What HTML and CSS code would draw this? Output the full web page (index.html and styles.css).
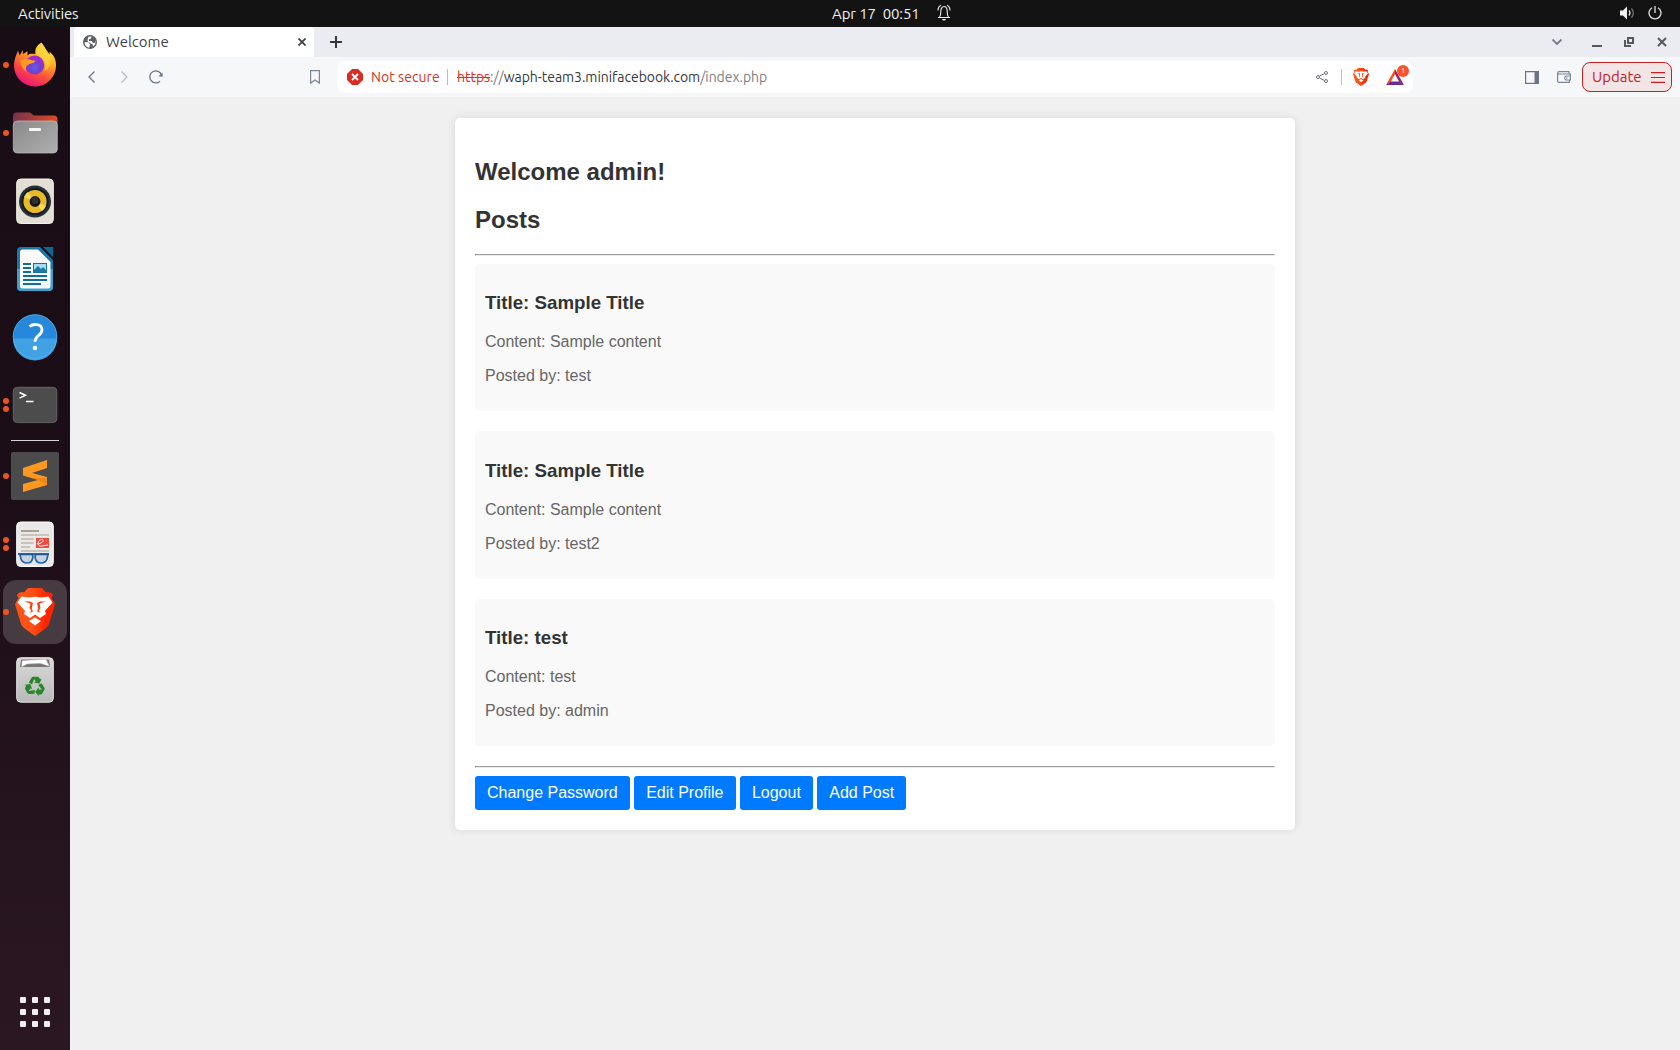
FILE: index.html
```html
<!DOCTYPE html>
<html lang="en">
<head>
<meta charset="utf-8">
<title>Welcome</title>
<link rel="stylesheet" href="styles.css">
</head>
<body>
<header class="topbar">
  <span class="activities">Activities</span>
  <span class="clock">Apr 17&nbsp; 00:51</span>
  <svg class="bell" width="14" height="18" viewBox="0 0 14 18" fill="none" stroke="#eee" stroke-width="1.1"><path d="M1 13.500h12M2.600 13c1-1.400 1.200-3 1.200-5.500C3.800 4.500 5.200 2.500 7 2.500s3.200 2 3.200 5c0 2.500.2 4.100 1.200 5.500M1 6.500C1 4.200 2.200 2 4 1.200M13 6.500C13 4.200 11.800 2 10 1.200"/><path d="M5 15h4l-1 1.500H6z" fill="#eee" stroke="none"/></svg>
  <div class="status">
    <svg width="15" height="14" viewBox="0 0 15 14" fill="none"><path d="M0 4.500h3L7 .5v13l-4-4H0z" fill="#f2f2f2"/><path d="M9 4.500q2 2.500 0 5" stroke="#ddd" stroke-width="1.300"/><path d="M11.500 2.300q3.500 4.700 0 9.400" stroke="#777" stroke-width="1.200"/></svg>
    <svg width="14" height="14" viewBox="0 0 14 14" fill="none" stroke="#e4e4e4" stroke-width="1.300"><path d="M7 0v7M4 1.700a6 6 0 1 0 6 0"/></svg>
  </div>
</header>
<div class="desktop">
  <nav class="dock">
    <div class="app"><i class="dots"><b></b></i>
      <svg width="48" height="48" viewBox="0 0 48 48"><defs><linearGradient id="fx" x1=".8" y1="0" x2=".3" y2="1"><stop offset="0" stop-color="#fff44f"/><stop offset=".35" stop-color="#ffae25"/><stop offset=".68" stop-color="#ff4b3d"/><stop offset="1" stop-color="#e8127c"/></linearGradient><radialGradient id="fp" cx=".5" cy=".65"><stop offset="0" stop-color="#625cf0"/><stop offset=".6" stop-color="#7040cf"/><stop offset="1" stop-color="#a02bd0"/></radialGradient></defs>
      <path fill="url(#fx)" d="M30.500 1.500C33 5 35 8 36.500 12l2 1.500v-2.800C43.500 14.500 45 19 45 24a21 21 0 0 1-42 1C3 18 5.500 14 7 9.500l1.500 5L12 9l-.2 4.200 4.600-3 .1 4.300c3-3 5-1.200 8-1.700C23.500 7 26.500 4 30.500 1.500z"/><circle cx="23.700" cy="24" r="9.500" fill="url(#fp)"/><path fill="#ff9920" d="M9 19.500c3-1.800 7-2 10-1 1.800 1 4 1 5.500 1.200-1 2.600-4 2.400-6 3.200-3.500 1.500-5 4.500-3 7.600-4-2-5.500-6.500-6.500-11z"/><path fill="#ffd43b" opacity=".8" d="M25 13c1-5 3-8 5.500-11 2.500 6 8 8 9 15 1 7-2 11-6 13 2-6 1-12-8.500-17z"/></svg></div>
    <div class="app"><i class="dots"><b></b></i>
      <svg width="48" height="48" viewBox="0 0 48 48"><defs><linearGradient id="fo"><stop offset="0" stop-color="#74334c"/><stop offset="1" stop-color="#df4d22"/></linearGradient><linearGradient id="fg" x2="1" y2="1"><stop offset="0" stop-color="#898989"/><stop offset="1" stop-color="#afafaf"/></linearGradient></defs><path fill="url(#fo)" d="M2 7.500q0-4 4-4h12q2 0 3 1.500T24 6.500h18.500q4 0 4 4v10H2z"/><rect x="2.300" y="12" width="44" height="32" rx="4" fill="url(#fg)" stroke="#c1c1c1" stroke-width=".7"/><rect x="18" y="19" width="12" height="3" rx="1" fill="#f7f7f7"/></svg></div>
    <div class="app"><i class="dots"></i>
      <svg width="48" height="48" viewBox="0 0 48 48"><rect x="5.700" y="2" width="36.600" height="44.500" rx="4" fill="#e3dfd5" stroke="#f4f1ea"/><circle cx="24" cy="24.500" r="16" fill="#273039"/><circle cx="24" cy="24.500" r="13.300" fill="#10151b"/><circle cx="24" cy="24.500" r="11.600" fill="#e7b92b"/><path d="M24 24.500 13 20a12 12 0 0 1 4-5zM24 24.500 35 29a12 12 0 0 1-4 5z" fill="#f6d85c"/><circle cx="24" cy="24.500" r="5.400" fill="#161616"/><circle cx="24" cy="23.500" r="3.500" fill="#303030"/></svg></div>
    <div class="app"><i class="dots"></i>
      <svg width="48" height="48" viewBox="0 0 48 48"><path fill="#1778aa" d="M10 2h19l13 13v27q0 4-4 4H10q-4 0-4-4V6q0-4 4-4z"/><path fill="#3fa0cc" d="M6 24h36v18q0 4-4 4H10q-4 0-4-4z"/><path fill="#fafafa" d="M11.500 4.500H27L39.500 17v24q0 2.500-2.500 2.500H11.500Q9 43.500 9 41V7q0-2.500 2.500-2.500z"/><path fill="#12658e" d="M32 2h10.300v10.500z"/><path stroke="#0d6e9f" stroke-width="2" d="M12 19h8M12 23h8M12 27h8M12 31h24M12 35h24M12 39h18"/><rect x="22.500" y="18.500" width="13" height="9" fill="#a9ddf4" stroke="#16729f"/><path d="M23 27v-2l4-4 3 3 2-2 4 4v1z" fill="#187bac"/></svg></div>
    <div class="app"><i class="dots"></i>
      <svg width="48" height="48" viewBox="0 0 48 48"><circle cx="24" cy="23.500" r="22" fill="#2588db"/><path fill="#41a1e5" d="M2 25.500h44a22 22 0 0 1-44 0z"/><circle cx="24" cy="23.500" r="21.800" fill="none" stroke="#5ab1ea" stroke-width=".8"/><path fill="none" stroke="#fff" stroke-width="2.800" d="M18.500 13.500c3.500-3 12.500-3 12.500 3.200 0 6-7 5.500-7 12"/><circle cx="24" cy="35" r="2.300" fill="#fff"/></svg></div>
    <div class="app"><i class="dots"><b></b><b></b></i>
      <svg width="48" height="48" viewBox="0 0 48 48"><rect x="2.300" y="6.300" width="43.500" height="35.300" rx="4" fill="#4c4c4c" stroke="#707070" stroke-width=".8"/><path fill="none" stroke="#fff" stroke-width="1.500" d="m8.500 11.500 6 2.800-6 2.800M15 20.500h7.500"/></svg></div>
    <div class="divider"></div>
    <div class="app"><i class="dots"><b></b></i>
      <svg width="48" height="48" viewBox="0 0 48 48"><rect width="48" height="48" rx="2" fill="#4a4b4a"/><path fill="#ff9820" d="M12 16 36 8v8l-15 5 15 4v8l-24 7v-8l15-4-15-4.500z"/><path fill="#e17d0c" d="m20 26 16 0v7l-9-5z" opacity=".55"/></svg></div>
    <div class="app"><i class="dots"><b></b><b></b></i>
      <svg width="48" height="48" viewBox="0 0 48 48"><rect x="5.700" y="2" width="36.600" height="44.500" rx="4" fill="#e9e9e7" stroke="#fff"/><path stroke="#a8a294" stroke-width="2" d="M10 11h18"/><path stroke="#c9c5ba" stroke-width="2" d="M10 15h28M10 19h13M10 23h13M10 27h9M10 31h28"/><rect x="25" y="18" width="13" height="10" fill="#ed4c43"/><path stroke="#fff" fill="none" d="M26 24c4 0 9-4 5-4.500-5 0-5 8 0 6.500l6-1"/><path fill="#c9d3da" stroke="#1d63ae" stroke-width="1.700" d="M9 34.500h12q1.500 1 .5 4.500-1 4-5.500 4t-6-4zM25 34.500h12l-1 4.500q-1.500 4-6 4t-5.500-4q-1-3.500.5-4.500z"/><path stroke="#1b579b" stroke-width="1.800" d="M7 34h31"/></svg></div>
    <div class="app active"><i class="dots"><b></b></i>
      <svg width="48" height="48" viewBox="0 0 48 48"><defs><linearGradient id="br"><stop offset=".4" stop-color="#ff5218"/><stop offset=".8" stop-color="#ff2300"/></linearGradient></defs>
      <g id="lion"><path fill="url(#br)" d="m17 0-4 4.500q-4-1.500-7 2.500l1.500 3L4 16l6 20q.8 2.300 3 4l11 8 11-8q2.200-1.700 3-4l6-20-3.500-6L42 7q-3-4-7-2.500L31 0z"/><path fill="#fff" d="m10.500 8.500 7.500 1 6-.8 6 .8 7.500-1 4 6-7.500 8.500 1 3-6 4-5-3.500-5 3.500-6-4 1-3-7.500-8.500zM18 33l6-3.500 6 3.500-6 4.500z"/><path fill="#fb3d10" d="M13 13.500l6 0 3 1.500-1.300 5.500 1.300 3-4 1.500 2.300-2-1.800-3 1-4.500zM35 13.500l-6 0-3 1.500 1.300 5.500-1.300 3 4 1.500-2.300-2 1.800-3-1-4.500z"/></g></svg></div>
    <div class="app"><i class="dots"></i>
      <svg width="48" height="48" viewBox="0 0 48 48"><defs><linearGradient id="tr" x2="0" y2="1"><stop offset="0" stop-color="#d9d9d9"/><stop offset="1" stop-color="#b9b9b9"/></linearGradient></defs><rect x="5.700" y="1.700" width="36.600" height="44.500" rx="4" fill="url(#tr)" stroke="#e4e4e4"/><path fill="#777" d="M10 3.500h28l1 7.500H9z"/><path fill="#fff" stroke="#999" stroke-width=".5" d="m11 4.500 24-1.500 3.500 7.500-9-3-13 .5-6 3z"/><g fill="#26862a"><path id="arrow" d="m17.800 26.500 2.700-4.800q.6-1 1.700-1h4.300q1 0 1.600 1l1 1.600 1.600-.9-2.200 5.200-5.500-.8 1.800-1.200-1.600-2.600-2.200 5.500z"/><use href="#arrow" transform="rotate(120 24 30.500)"/><use href="#arrow" transform="rotate(240 24 30.500)"/></g></svg></div>
    <div class="show-apps"><i></i><i></i><i></i><i></i><i></i><i></i><i></i><i></i><i></i></div>
  </nav>
  <section class="browser">
    <div class="tabs">
      <div class="tab">
        <svg width="14" height="14" viewBox="0 0 14 14"><circle cx="7" cy="7" r="7" fill="#5d6065"/><path fill="#fff" d="M1.500 7.200h3.200L7 9v1.500L6 12.700A5.700 5.700 0 0 1 1.500 7.200zM5.500 1.800 8.500 1.500 8 3.500 5.800 4.500 6 6h2.500l1.500 2h1.500l1-2.500-.3 4-2.200 2L9.500 9H8L7 7.500H5L4.500 5z"/></svg>
        <span class="tab-title">Welcome</span>
        <svg width="8" height="8" viewBox="0 0 8 8" stroke="#3b3d42" stroke-width="1.700"><path d="m.5.500 7 7m0-7-7 7"/></svg>
      </div>
      <svg class="plus" width="12" height="12" viewBox="0 0 12 12" stroke="#35363b" stroke-width="2"><path d="M6 0v12M0 6h12"/></svg>
      <div class="controls">
        <svg width="10" height="6" viewBox="0 0 10 6" fill="none" stroke="#707889" stroke-width="1.800"><path d="m.5.500 4.500 4.500L9.500.5"/></svg>
        <svg width="10" height="10" viewBox="0 0 10 10" stroke="#55585d" stroke-width="2"><path d="M0 9h10"/></svg>
        <svg width="10" height="10" viewBox="0 0 10 10" fill="none" stroke="#55585d" stroke-width="2"><path d="M4 1h5v5H4zM1 3v6h6"/></svg>
        <svg width="10" height="10" viewBox="0 0 10 10" stroke="#55585d" stroke-width="2"><path d="m1 1 8 8m0-8-8 8"/></svg>
      </div>
    </div>
    <div class="toolbar">
      <svg class="back" width="7" height="12" viewBox="0 0 7 12" fill="none" stroke="#6b7588" stroke-width="1.300"><path d="M6.500.5 1 6l5.500 5.500"/></svg>
      <svg class="forward" width="7" height="12" viewBox="0 0 7 12" fill="none" stroke="#b8bec8" stroke-width="1.300"><path d="M.5.500 6 6 .5 11.500"/></svg>
      <svg class="reload" width="14" height="14" viewBox="0 0 14 14" fill="none" stroke="#6b7588" stroke-width="1.200"><path d="M11 11.200A6 6 0 1 1 12.500 5"/><path d="m13.500 2.500.2 4.200-4.200-.5z" fill="#6b7588" stroke="none"/></svg>
      <svg class="bookmark" width="10" height="14" viewBox="0 0 10 14" fill="none" stroke="#7d8798" stroke-width="1.200"><path d="M.6.600h8.800v12.500L5 10l-4.400 3.100z"/></svg>
      <div class="address">
        <svg width="16" height="16" viewBox="0 0 16 16"><path d="M5 0h6l5 5v6l-5 5H5l-5-5V5z" fill="#d72c23"/><path d="m5 5 6 6m0-6-6 6" stroke="#fff" stroke-width="1.900"/></svg>
        <span class="insecure">Not secure</span><span class="rule"></span>
        <span class="url"><s>https</s><em>://</em>waph-team3.minifacebook.com<em>/index.php</em></span>
        <svg class="share" width="12" height="12" viewBox="0 0 12 12" fill="none" stroke="#6d7178"><path d="m3.500 5 5-2.500m-5 4.500 5 2.500"/><circle cx="2" cy="6" r="1.500"/><circle cx="10" cy="2" r="1.500"/><circle cx="10" cy="10" r="1.500"/></svg>
        <span class="rule far"></span>
        <svg class="shield" width="16" height="18" viewBox="4 0 40 48" preserveAspectRatio="none"><use href="#lion"/></svg>
        <div class="rewards"><svg width="18" height="16" viewBox="0 0 18 16"><path d="M9 0 0 16l5-3.500L9 5z" fill="#ff4724"/><path d="m9 0 9 16-5-3.500L9 5z" fill="#9e1f63"/><path d="M0 16h18l-4.500-3.500h-9z" fill="#662d91"/></svg><span class="badge">1</span></div>
      </div>
      <div class="right">
        <svg width="14" height="13" viewBox="0 0 14 13"><path d="M.6.600h12.800v11.800H.6z" fill="none" stroke="#6b7588" stroke-width="1.200"/><path d="M9.500 0H14v13H9.500z" fill="#6b7588"/></svg>
        <svg width="14" height="12" viewBox="0 0 14 12" fill="none" stroke="#7d8798" stroke-width="1.200"><path d="M12 3V.6H2Q.6.600.6 2v8q0 1.400 1.400 1.400h10.500V9M.6 2Q.6 3 2 3h11.400v6H9a2.200 2.200 0 0 1 0-4h4M9 7h1.500"/></svg>
        <div class="update"><span>Update</span><svg width="14" height="11" viewBox="0 0 14 11" stroke="#c5201f" stroke-width="1.200"><path d="M0 .6h14M0 5.500h14M0 10.400h14"/></svg></div>
      </div>
    </div>
    <main class="page">
      <div class="container">
        <h2>Welcome admin!</h2>
        <h2>Posts</h2>
        <hr>
        <article class="post"><h3>Title: Sample Title</h3><p>Content: Sample content</p><p>Posted by: test</p></article>
        <article class="post"><h3>Title: Sample Title</h3><p>Content: Sample content</p><p>Posted by: test2</p></article>
        <article class="post"><h3>Title: test</h3><p>Content: test</p><p>Posted by: admin</p></article>
        <hr>
        <div class="actions"><a>Change Password</a><a>Edit Profile</a><a>Logout</a><a>Add Post</a></div>
      </div>
    </main>
  </section>
</div>
</body>
</html>
```
FILE: styles.css
```css
* { box-sizing: border-box; }
body {
  margin: 0;
  width: 1680px;
  height: 1050px;
  overflow: hidden;
  display: flex;
  flex-direction: column;
  font: 15px/20px Ubuntu, "Noto Sans", sans-serif;
}
svg { display: block; flex: none; }

/* System bar */
.topbar {
  height: 27px;
  flex: none;
  display: flex;
  align-items: center;
  background: #131313;
  color: #f0f0f0;
  padding: 0 18px;
  white-space: nowrap;
}
.activities { width: 814px; }
.activities, .clock { letter-spacing: -.1px; line-height: 19px; }
.clock { width: 87px; }
.bell { margin-left: 18px; margin-bottom: 1px; }
.status { margin-left: auto; display: flex; gap: 13px; padding-bottom: 1px; }

.desktop { flex: 1; min-height: 0; display: flex; }

/* Dock */
.dock {
  width: 70px;
  flex: none;
  padding-top: 4px;
  display: flex;
  flex-direction: column;
  align-items: center;
  background: linear-gradient(#190d15, #1c0e17 45%, #2b1722);
}
.app {
  width: 70px;
  height: 68px;
  flex: none;
  display: flex;
  align-items: center;
}
.dots { width: 11px; flex: none; padding-left: 3px; display: flex; flex-direction: column; gap: 2.800px; }
.dots b { width: 6px; height: 6px; border-radius: 50%; background: #e95420; }
.active {
  width: 64px;
  height: 64px;
  margin: 2px 0;
  border-radius: 13px;
  background: #473b42;
}
.active .dots { width: 8px; padding-left: 0; }
.divider { width: 48px; height: 1px; margin: 1px 0; background: #d5d2d4; flex: none; }
.show-apps {
  margin: auto 0 23px;
  display: grid;
  grid-template-columns: repeat(3, 6px);
  gap: 6px;
}
.show-apps i { height: 6px; border-radius: 1px; background: #f1f0f0; }

/* Browser window */
.browser { flex: 1; display: flex; flex-direction: column; min-width: 0; }
.tabs { height: 30px; display: flex; align-items: center; background: #ebecf1; padding-left: 4px; }
.tab {
  width: 240px;
  height: 30px;
  display: flex;
  align-items: center;
  padding: 0 8px 0 9px;
  background: #fff;
  border-radius: 4px 4px 0 0;
  color: #3f4146;
}
.tab-title { flex: 1; margin-left: 9px; }
.plus { margin-left: 16px; }
.controls { margin-left: auto; display: flex; align-items: center; padding-right: 13px; }
.controls svg { margin-left: 22px; }
.controls svg:nth-child(2) { margin-left: 30px; }
.controls svg:nth-child(4) { margin-left: 23px; }
.toolbar { height: 40px; display: flex; align-items: center; background: #f6f7f9; padding-left: 18px; }
.forward { margin-left: 26px; }
.reload { margin-left: 21px; }
.bookmark { margin-left: 147px; }
.address {
  width: 1076px;
  height: 32px;
  margin-left: 17px;
  padding: 0 5px 0 10px;
  display: flex;
  align-items: center;
  background: #fff;
  border-radius: 8px;
  white-space: nowrap;
  font-size: 14px;
}
.insecure { width: 69px; margin-left: 8px; color: #d93025; letter-spacing: .05px; }
.rule { width: 1px; height: 16px; margin-left: 7px; background: #babcc0; }
.url { margin-left: 9px; color: #36383d; letter-spacing: -.040px; }
.url em { font-style: normal; color: #7c7e83; }
.url s { color: #d93025; }
.share { margin-left: auto; }
.far { margin-left: 13px; }
.shield { margin-left: 11px; }
.rewards { position: relative; margin: 0 0 0 17px; width: 22px; }
.badge {
  position: absolute;
  left: 11px;
  top: -4px;
  width: 12px;
  height: 12px;
  border-radius: 50%;
  background: #fb542b;
  color: #fff;
  font-size: 8px;
  line-height: 12px;
  text-align: center;
}
.right { margin-left: auto; display: flex; align-items: center; padding-right: 8px; }
.right svg + svg { margin-left: 18px; }
.update {
  width: 90px;
  height: 30px;
  margin-left: 11px;
  padding: 0 6px 0 9px;
  display: flex;
  align-items: center;
  justify-content: space-between;
  border: 1px solid #c5201f;
  border-radius: 8px;
  background: #f3e4e5;
  color: #c5201f;
}

/* Web page */
.page { flex: 1; background: #f0f0f0; padding-top: 21px; font: 16px/18px "Liberation Sans", Arial, sans-serif; }
.container {
  width: 840px;
  margin: 0 auto;
  padding: 20px;
  display: flow-root;
  background: #fff;
  border-radius: 5px;
  box-shadow: 0 0 10px rgba(0, 0, 0, .1);
}
h2 { margin: 20px 0; font-size: 24px; line-height: 28px; color: #333; }
hr { margin: 8px 0; }
.post { display: flow-root; padding: 10px; margin-bottom: 20px; background: #f9f9f9; border-radius: 5px; }
.post h3 { margin: 18.300px 0 19.140px; font-size: 18.720px; line-height: 22px; color: #333; }
.post p { margin: 16px 0; color: #666; }
.actions { display: flex; gap: 4.400px; }
.actions a { padding: 8px 12px; background: #007bff; color: #fff; border-radius: 3px; }
```
